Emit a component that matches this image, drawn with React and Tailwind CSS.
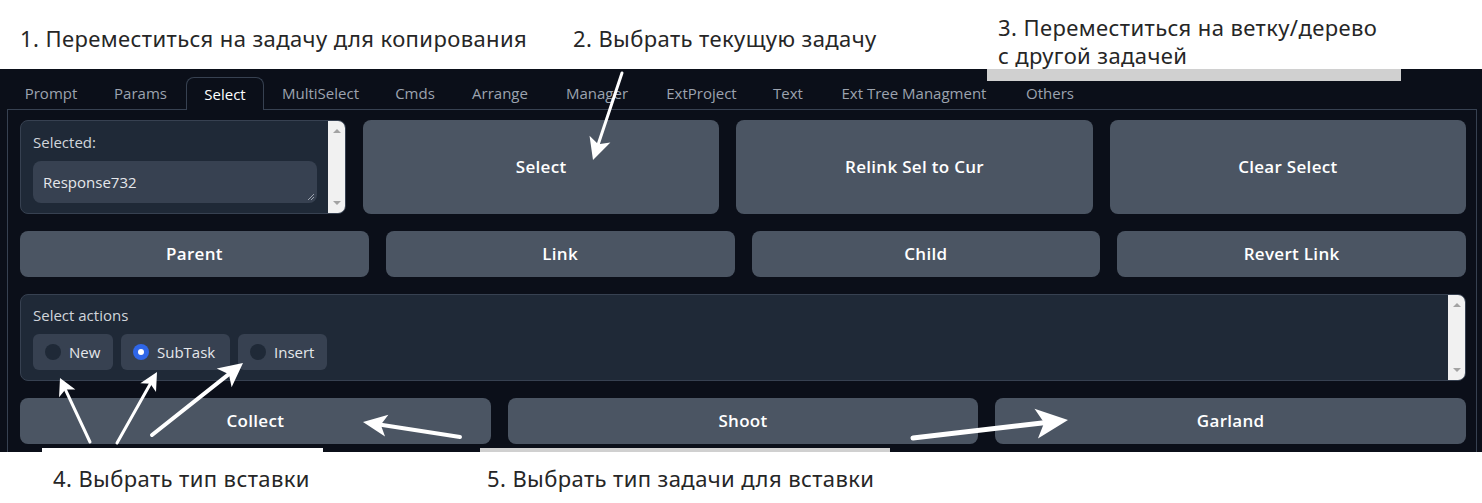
import React from "react";

const tabs = [
  ["Prompt", "w-[88px]"],
  ["Params", "w-[91px]"],
  ["Select", "w-[78px]"],
  ["MultiSelect", "w-[113px]"],
  ["Cmds", "w-[76px]"],
  ["Arrange", "w-[94px]"],
  ["Manager", "w-[100px]"],
  ["ExtProject", "w-[109px]"],
  ["Text", "w-[64px]"],
  ["Ext Tree Managment", "w-[188px]"],
  ["Others", "w-[84px]"],
];

const ui = { fontFamily: '"Open Sans", "Liberation Sans", sans-serif' };
const note = { fontFamily: '"Noto Sans", "Open Sans", sans-serif' };

// light native-looking scrollbar with two arrows
const Scrollbar = () => (
  <div className="relative w-[17px] shrink-0 bg-[#f1f1f1]">
    <div className="absolute left-[5px] top-[8px] w-0 h-0 border-x-[4px] border-x-transparent border-b-[4px] border-b-[#a3a3a3]" />
    <div className="absolute left-[5px] bottom-[8px] w-0 h-0 border-x-[4px] border-x-transparent border-t-[4px] border-t-[#a3a3a3]" />
  </div>
);

const Button = ({ children }) => (
  <button className="rounded-lg bg-[#4b5563] text-white text-[17px] tracking-[0.3px] font-semibold flex items-center justify-center">
    {children}
  </button>
);

const Radio = ({ label, checked, width }) => (
  <div className={`flex items-center gap-[8px] pl-[12px] h-[36px] rounded-md bg-[#374151] ${width}`}>
    {checked ? (
      <span className="w-[16px] h-[16px] rounded-full bg-[#2f66e8] flex items-center justify-center">
        <span className="w-[6px] h-[6px] rounded-full bg-white" />
      </span>
    ) : (
      <span className="w-[16px] h-[16px] rounded-full bg-[#1f2937]" />
    )}
    <span className="text-[15px] text-[#e5e7eb]">{label}</span>
  </div>
);

const Arrow = ({ s, t, w = 4, L = 22, W = 11 }) => {
  const dx = t[0] - s[0];
  const dy = t[1] - s[1];
  const len = Math.hypot(dx, dy);
  const ux = dx / len;
  const uy = dy / len;
  const nx = -uy;
  const ny = ux;
  const bx = t[0] - ux * L;
  const by = t[1] - uy * L;
  const notch = L * 0.25;
  const pts = [
    [t[0], t[1]],
    [bx + nx * W, by + ny * W],
    [bx + ux * notch, by + uy * notch],
    [bx - nx * W, by - ny * W],
  ]
    .map((p) => p.join(","))
    .join(" ");
  return (
    <g>
      <line
        x1={s[0]}
        y1={s[1]}
        x2={bx + ux * notch}
        y2={by + uy * notch}
        stroke="white"
        strokeWidth={w}
        strokeLinecap="round"
      />
      <polygon points={pts} fill="white" />
    </g>
  );
};

export default function App() {
  return (
    <div className="relative w-[1482px] h-[503px] bg-white overflow-hidden">
      {/* top annotations */}
      <div className="h-[69px] flex pt-[24px] text-[22px] tracking-[0.4px] leading-[28px] text-[#262626]" style={note}>
        <div className="pl-[20px] w-[573px]">1. Переместиться на задачу для копирования</div>
        <div>2. Выбрать текущую задачу</div>
      </div>

      {/* app */}
      <div className="h-[383px] bg-[#0b0f19] overflow-hidden pl-[7px] pr-[5px] pt-[8px]" style={ui}>
        {/* tabs */}
        <div className="flex h-[33px]">
          {tabs.map(([name, w]) =>
            name === "Select" ? (
              <div
                key={name}
                className={`${w} relative z-10 flex items-center justify-center rounded-t-lg border border-b-0 border-[#374151] bg-[#0b0f19] text-[15px] text-white`}
              >
                {name}
              </div>
            ) : (
              <div key={name} className={`${w} flex items-center justify-center text-[15px] text-[#9ca3af]`}>
                {name}
              </div>
            )
          )}
        </div>

        {/* tab panel */}
        <div className="-mt-px h-[400px] border border-[#374151] pl-[12px] pr-[10px] pt-[10px] flex flex-col gap-[17px]">
          <div className="grid grid-cols-[326px_1fr_1fr_1fr] gap-[17px] h-[94px]">
            <div className="flex rounded-lg border border-[#374151] bg-[#1f2937] overflow-hidden">
              <div className="flex-1 pl-[12px] pr-[11px] pt-[11px]">
                <div className="h-[20px] leading-[20px] text-[15px] text-[#d1d5db]">Selected:</div>
                <div className="relative mt-[9px] h-[42px] rounded-lg bg-[#374151] px-[10px] flex items-center text-[15px] text-[#e5e7eb]">
                  Response732
                  <svg className="absolute right-[2px] bottom-[2px]" width="8" height="8" viewBox="0 0 8 8">
                    <path d="M7 1 L1 7 M7 4 L4 7" stroke="#9ca3af" strokeWidth="1" />
                  </svg>
                </div>
              </div>
              <Scrollbar />
            </div>
            <Button>Select</Button>
            <Button>Relink Sel to Cur</Button>
            <Button>Clear Select</Button>
          </div>

          <div className="grid grid-cols-4 gap-[17px] h-[46px]">
            <Button>Parent</Button>
            <Button>Link</Button>
            <Button>Child</Button>
            <Button>Revert Link</Button>
          </div>

          <div className="flex h-[87px] rounded-lg border border-[#374151] bg-[#1f2937] overflow-hidden">
            <div className="flex-1 pl-[12px] pt-[10px]">
              <div className="h-[20px] leading-[20px] text-[15px] text-[#d1d5db]">Select actions</div>
              <div className="mt-[9px] flex gap-[8px]">
                <Radio label="New" width="w-[80px]" />
                <Radio label="SubTask" checked width="w-[109px]" />
                <Radio label="Insert" width="w-[89px]" />
              </div>
            </div>
            <Scrollbar />
          </div>

          <div className="grid grid-cols-3 gap-[17px] h-[46px]">
            <Button>Collect</Button>
            <Button>Shoot</Button>
            <Button>Garland</Button>
          </div>
        </div>
      </div>

      {/* bottom annotations */}
      <div className="h-[51px] flex pt-[12px] text-[22px] tracking-[0.4px] leading-[28px] text-[#262626]" style={note}>
        <div className="pl-[53px] w-[487px]">4. Выбрать тип вставки</div>
        <div>5. Выбрать тип задачи для вставки</div>
      </div>

      {/* label 3 box hanging over the tab bar */}
      <div className="absolute left-[987px] top-0 w-[414px]" style={note}>
        <div className="h-[69px] bg-white pl-[11px] pt-[13px] text-[22px] tracking-[0.4px] leading-[28px] text-[#262626]">
          3. Переместиться на ветку/дерево
          <br />с другой задачей
        </div>
        <div className="h-[12px] bg-[#d0d0d0]" />
      </div>
      <div className="absolute left-[42px] top-[448px] w-[281px] h-[4px] bg-white" />
      <div className="absolute left-[480px] top-[448px] w-[410px] h-[4px] bg-[#d0d0d0]" />

      {/* arrows */}
      <svg className="absolute inset-0 pointer-events-none" width="1482" height="503">
        <Arrow s={[622, 73]} t={[593, 160]} w={3} L={22} W={11} />
        <Arrow s={[90, 442]} t={[60, 378]} w={3} L={17} W={9} />
        <Arrow s={[117, 443]} t={[157, 372]} w={3} L={18} W={9} />
        <Arrow s={[152, 435]} t={[243, 363]} w={4} L={24} W={12} />
        <Arrow s={[460, 437]} t={[363, 422]} w={4} L={24} W={11} />
        <Arrow s={[913, 438]} t={[1068, 420]} w={5} L={32} W={15} />
      </svg>
    </div>
  );
}
